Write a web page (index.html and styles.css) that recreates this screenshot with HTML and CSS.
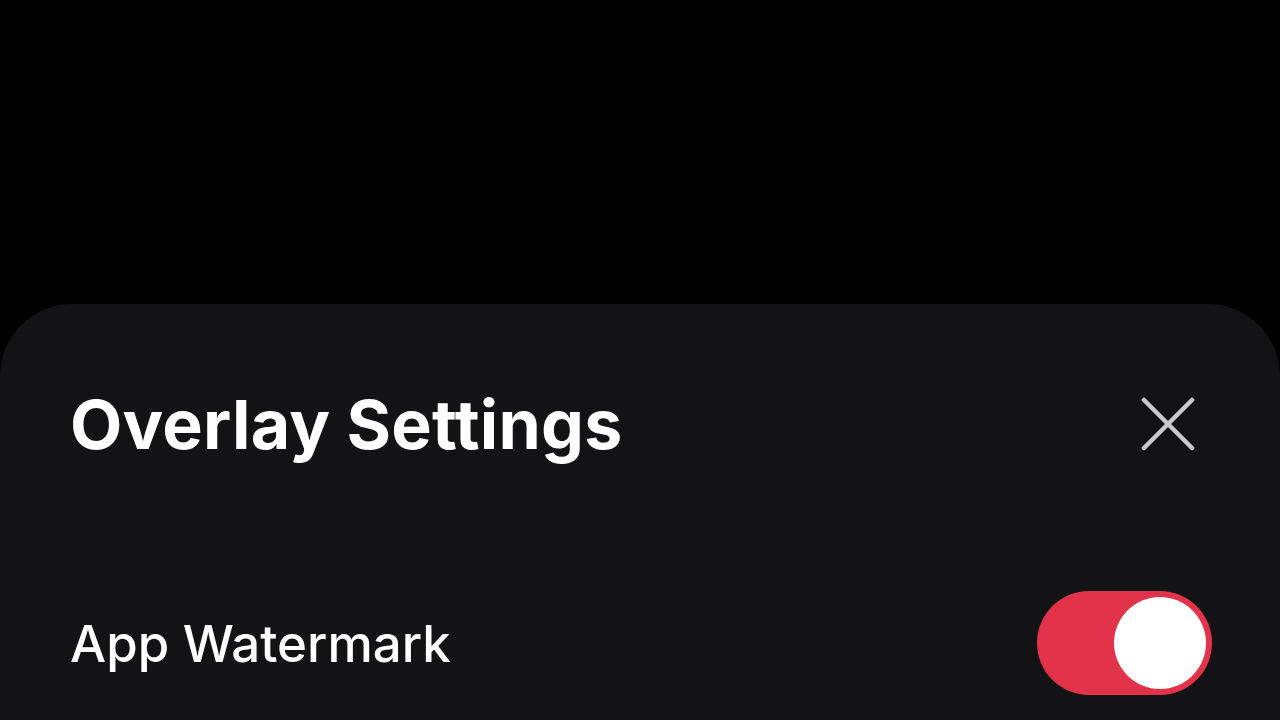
FILE: index.html
```html
<!DOCTYPE html>
<html lang="en">
<head>
    <meta charset="UTF-8">
    <meta name="viewport" content="width=device-width, initial-scale=1.0">
    <title>Overlay Settings</title>
    <link rel="stylesheet" href="styles.css">
</head>
<body>
    <div class="sheet">
        <div class="sheet-header">
            <h1 class="sheet-title">Overlay Settings</h1>
            <button class="close-button" aria-label="Close">
                <svg width="54" height="54" viewBox="0 0 54 54">
                    <path d="M3 3 L51 51 M51 3 L3 51" stroke="#c9c9ce" stroke-width="4.5" stroke-linecap="round"/>
                </svg>
            </button>
        </div>

        <div class="setting-row">
            <span class="setting-label">App Watermark</span>
            <label class="switch">
                <input type="checkbox" checked>
                <span class="track"><span class="knob"></span></span>
            </label>
        </div>
    </div>
</body>
</html>
```

FILE: styles.css
```css
body {
    margin: 0;
    background-color: #000000;
    font-family: Inter, "Open Sans", sans-serif;
    height: 720px;
    overflow: hidden;
}
.sheet {
    margin-top: 304px;
    height: 416px;
    background-color: #131215;
    border-radius: 72px 72px 0 0;
    padding: 0 68px 0 70px;
}
.sheet-header {
    display: flex;
    justify-content: space-between;
    align-items: center;
    padding-top: 78px;
    height: 84px;
}
.sheet-title {
    margin: 0;
    color: #ffffff;
    font-size: 68px;
    font-weight: 700;
    letter-spacing: 0.2px;
}
.close-button {
    background: none;
    border: none;
    padding: 0;
    margin-right: 17px;
    display: flex;
    cursor: pointer;
}
.setting-row {
    display: flex;
    justify-content: space-between;
    align-items: center;
    margin-top: 125px;
}
.setting-label {
    color: #ffffff;
    font-size: 51px;
    font-weight: 500;
}
.switch input {
    display: none;
}
.track {
    display: flex;
    align-items: center;
    justify-content: flex-end;
    width: 175px;
    height: 104px;
    box-sizing: border-box;
    padding: 0 6px;
    border-radius: 52px;
    background-color: #e2334a;
}
.knob {
    width: 92px;
    height: 92px;
    border-radius: 50%;
    background-color: #ffffff;
}
```
